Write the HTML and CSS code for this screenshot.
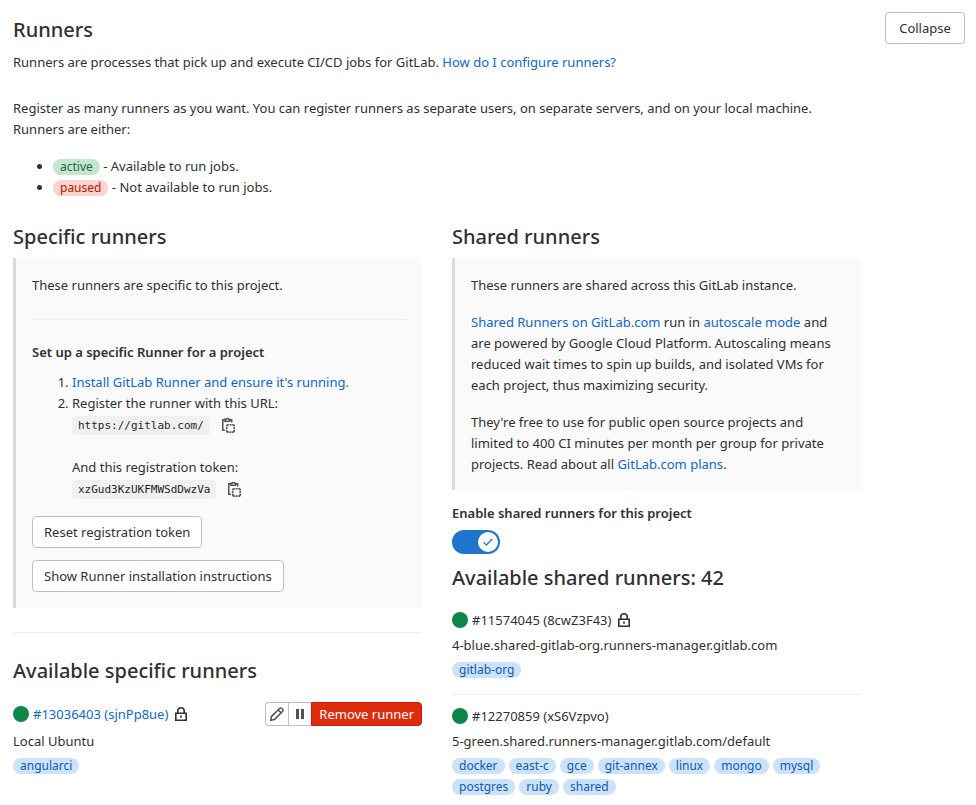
FILE: index.html
```html
<!DOCTYPE html>
<html lang="en">
<head>
<meta charset="utf-8">
<meta name="viewport" content="width=device-width, initial-scale=1">
<title>Runners</title>
<link rel="stylesheet" href="styles.css">
</head>
<body>
<svg class="sprite" aria-hidden="true">
  <symbol id="lock" viewBox="0 0 16 16"><path fill="none" stroke="currentColor" stroke-width="1.6" d="M2.8 7.3h10.4v6.9H2.8zM4.8 7V5a3.2 3.2 0 0 1 6.4 0v2"/><path fill="currentColor" d="M7.2 9.4h1.6v2.4H7.2z"/></symbol>
  <symbol id="copy" viewBox="0 0 16 16"><path fill="none" stroke="currentColor" stroke-width="1.5" d="M5 13.250H2.750V2.750H5M9.500 2.750h2.200V5.500"/><path fill="none" stroke="currentColor" stroke-width="1.400" d="M4.900 4.200V2.200h1.200a1.300 1.300 0 0 1 2.400 0h1.200v2z"/><path fill="none" stroke="currentColor" stroke-width="1.600" d="M6.800 9.600V9a1.200 1.200 0 0 1 1.200-1.200h.8M12.200 7.800h.8A1.200 1.200 0 0 1 14.200 9v.6M14.200 13v.9a1.200 1.200 0 0 1-1.200 1.200h-.8M8.800 15.100H8a1.200 1.200 0 0 1-1.200-1.200V13M9.500 7.800h2M9.500 15.100h2M6.800 10.300v2M14.200 10.300v2"/></symbol>
  <symbol id="pencil" viewBox="0 0 16 16"><path fill="none" stroke="currentColor" stroke-width="1.5" stroke-linejoin="round" d="M1.700 14.300l.7-3.700 8.300-8.300a1.400 1.400 0 0 1 2 0l1 1a1.400 1.400 0 0 1 0 2l-8.300 8.300zM9.200 4l2.800 2.800"/></symbol>
  <symbol id="pause" viewBox="0 0 16 16"><path fill="currentColor" d="M4 3h3v10H4zM9 3h3v10H9z"/></symbol>
  <symbol id="check" viewBox="0 0 16 16"><path fill="none" stroke="currentColor" stroke-width="1.700" stroke-linecap="round" stroke-linejoin="round" d="M2.500 8.800l3.400 3.200 7.300-7.600"/></symbol>
</svg>

<main class="settings">
  <header class="settings-header">
    <div>
      <h1 class="title title-page">Runners</h1>
      <p>Runners are processes that pick up and execute CI/CD jobs for GitLab. <a href="#configure">How do I configure runners?</a></p>
    </div>
    <button class="btn btn-collapse" type="button">Collapse</button>
  </header>

  <div class="settings-content">
    <p>Register as many runners as you want. You can register runners as separate users, on separate servers, and on your local machine.<br>Runners are either:</p>
    <ul class="states">
      <li><span class="badge badge-success">active</span> - Available to run jobs.</li>
      <li><span class="badge badge-danger">paused</span> - Not available to run jobs.</li>
    </ul>

    <div class="columns">
      <section>
        <h2 class="title">Specific runners</h2>
        <div class="callout">
          <p>These runners are specific to this project.</p>
          <hr class="callout-rule">
          <h3 class="subtitle">Set up a specific Runner for a project</h3>
          <ol class="steps">
            <li><a href="#install">Install GitLab Runner and ensure it's running.</a></li>
            <li>Register the runner with this URL:
              <div class="copy-line"><code>https://gitlab.com/</code><button class="icon-btn" type="button" aria-label="Copy URL"><svg class="icon"><use href="#copy"/></svg></button></div>
              <div class="token-label">And this registration token:</div>
              <div class="copy-line"><code>xzGud3KzUKFMWSdDwzVa</code><button class="icon-btn" type="button" aria-label="Copy token"><svg class="icon"><use href="#copy"/></svg></button></div>
            </li>
          </ol>
          <div class="actions">
            <button class="btn" type="button">Reset registration token</button>
            <button class="btn" type="button">Show Runner installation instructions</button>
          </div>
        </div>
        <hr class="section-rule">
        <h2 class="title">Available specific runners</h2>
        <div class="runner runner-own">
          <div class="runner-head">
            <span class="status"></span>
            <a href="#13036403">#13036403 (sjnPp8ue)</a>
            <svg class="icon lock"><use href="#lock"/></svg>
            <div class="btn-group">
              <button class="btn btn-small" type="button" aria-label="Edit"><svg class="icon"><use href="#pencil"/></svg></button>
              <button class="btn btn-small" type="button" aria-label="Pause"><svg class="icon"><use href="#pause"/></svg></button>
              <button class="btn btn-small btn-danger" type="button">Remove runner</button>
            </div>
          </div>
          <p>Local Ubuntu</p>
          <div class="tags"><span class="badge">angularci</span></div>
        </div>
      </section>

      <section>
        <h2 class="title">Shared runners</h2>
        <div class="callout">
          <p>These runners are shared across this GitLab instance.</p>
          <p><a href="#shared">Shared Runners on GitLab.com</a> run in <a href="#autoscale">autoscale mode</a> and are powered by Google Cloud Platform. Autoscaling means reduced wait times to spin up builds, and isolated VMs for each project, thus maximizing security.</p>
          <p>They're free to use for public open source projects and limited to 400 CI minutes per month per group for private projects. Read about all <a href="#plans">GitLab.com plans</a>.</p>
        </div>
        <label class="subtitle toggle-label" for="shared-toggle">Enable shared runners for this project</label>
        <div class="toggle">
          <input id="shared-toggle" type="checkbox" role="switch" checked>
          <span class="knob"><svg><use href="#check"/></svg></span>
        </div>
        <h2 class="title">Available shared runners: 42</h2>
        <div class="runner-list">
          <div class="runner">
            <div class="runner-head"><span class="status"></span><span>#11574045 (8cwZ3F43)</span><svg class="icon lock"><use href="#lock"/></svg></div>
            <p>4-blue.shared-gitlab-org.runners-manager.gitlab.com</p>
            <div class="tags"><span class="badge">gitlab-org</span></div>
          </div>
          <div class="runner">
            <div class="runner-head"><span class="status"></span><span>#12270859 (xS6Vzpvo)</span></div>
            <p>5-green.shared.runners-manager.gitlab.com/default</p>
            <div class="tags">
              <span class="badge">docker</span><span class="badge">east-c</span><span class="badge">gce</span><span class="badge">git-annex</span><span class="badge">linux</span><span class="badge">mongo</span><span class="badge">mysql</span><span class="badge">postgres</span><span class="badge">ruby</span><span class="badge">shared</span>
            </div>
          </div>
        </div>
      </section>
    </div>
  </div>
</main>
</body>
</html>
```
FILE: styles.css
```css
* { box-sizing: border-box; }

body {
  margin: 0;
  background: #fff;
  color: #303030;
  font: 13px/21px "Noto Sans", "Open Sans", sans-serif;
}

p, h1, h2, h3, ul, ol { margin: 0; padding: 0; }
a { color: #1068bf; text-decoration: none; }
button { font: inherit; color: inherit; cursor: pointer; }
hr { margin: 0; border: 0; border-top: 1px solid #eee; }

.sprite { display: none; }
.icon { display: block; width: 16px; height: 16px; flex: none; }

.settings { padding: 12px 11px 8px 13px; }
.settings-header {
  display: flex;
  justify-content: space-between;
  align-items: flex-start;
  gap: 16px;
  margin-bottom: 25px;
}
.settings-content { max-width: 848px; }

.title { font-size: 20px; line-height: 24px; font-weight: 500; }
.title-page { line-height: 36px; margin-bottom: 4px; }
.subtitle { display: block; font-size: 13px; font-weight: 600; }

.states { margin: 16px 0 27px; padding-left: 40px; }

.columns {
  display: grid;
  grid-template-columns: 1fr 1fr;
  gap: 30px;
}

.callout {
  margin-top: 9px;
  padding: 17px 16px 15px;
  border-left: 3px solid #dbdbdb;
  background: #fafafa;
}
.callout p + p { margin-top: 16px; }
.callout-rule { margin: 23px 0 22px; border-color: #eee; }

.steps { margin-top: 9px; padding-left: 40px; }
.copy-line { display: flex; align-items: center; gap: 10px; height: 22px; }
.token-label { margin-top: 21px; }
code {
  padding: 0 6px;
  border-radius: 4px;
  background: #f0f0f0;
  color: #1f1f1f;
  font: 11px/19px "DejaVu Sans Mono", monospace;
}
.icon-btn { padding: 0; border: 0; background: none; color: #525252; }

.actions {
  display: flex;
  flex-direction: column;
  align-items: flex-start;
  gap: 12px;
  padding: 16px 0 1px;
}
.btn {
  height: 32px;
  padding: 0 11px;
  border: 1px solid #bfbfbf;
  border-radius: 4px;
  background: #fff;
  white-space: nowrap;
}
.btn-collapse { min-width: 80px; }
.btn-group { display: flex; margin-left: auto; }
.btn-small { height: 24px; padding: 0 3px; color: #525252; }
.btn-group .btn:not(:last-child) { border-right: 0; border-radius: 0; }
.btn-group .btn:first-child { border-radius: 4px 0 0 4px; }
.btn-group .btn-danger {
  padding: 0 7px;
  border-color: #c91c00;
  border-radius: 0 4px 4px 0;
  background: #dd2b0e;
  color: #fff;
}

.section-rule { margin: 24px 0 26px; }

.runner-head { display: flex; align-items: center; gap: 4px; min-height: 22px; }
.runner-head .status + * { margin-right: 1px; }
.runner p { margin: 4px 0; }
.runner-own { margin-top: 19px; }
.runner-own p { margin-top: 5px; }
.runner-list { margin-top: 19px; }
.runner + .runner { margin-top: 16px; padding-top: 10px; border-top: 1px solid #eee; }
.status { width: 16px; height: 16px; border-radius: 50%; background: #108548; }

.tags { display: flex; flex-wrap: wrap; gap: 5px 4px; padding-top: 2px; }
.badge {
  display: inline-block;
  padding: 0 7px;
  border-radius: 8px;
  background: #cbe2f9;
  color: #0b5cad;
  font-size: 12px;
  line-height: 16px;
}
.badge-success { background: #c3e6cd; color: #24663b; }
.badge-danger { background: #fdd4cd; color: #ae1800; }

.toggle-label { margin: 13px 0 6px; }
.toggle { display: grid; width: 48px; height: 24px; margin-bottom: 12px; }
.toggle > * { grid-area: 1 / 1; }
.toggle input {
  appearance: none;
  margin: 0;
  border-radius: 12px;
  background: #1f75cb;
  cursor: pointer;
}
.knob {
  display: grid;
  place-items: center;
  place-self: center end;
  width: 20px;
  height: 20px;
  margin-right: 2px;
  border-radius: 50%;
  background: #fff;
  color: #1f75cb;
  pointer-events: none;
}
.knob svg { width: 12px; height: 12px; }
```
